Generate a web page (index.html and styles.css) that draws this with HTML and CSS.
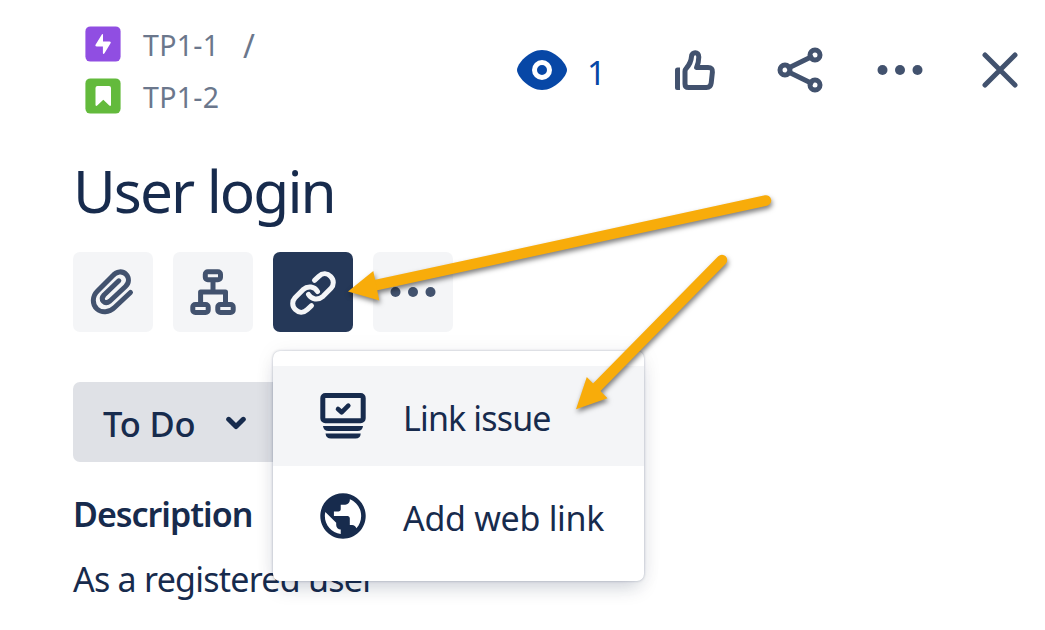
FILE: index.html
```html
<!DOCTYPE html>
<html lang="en">
<head>
<meta charset="utf-8">
<title>User login</title>
<link rel="stylesheet" href="styles.css">
</head>
<body>
<main class="issue">
  <header class="header">
    <nav class="crumbs">
      <div class="crumb">
        <svg class="type" viewBox="0 0 36 36"><rect x=".4" y=".4" width="35.2" height="35.2" rx="5" fill="#904ee2"/><path d="M17 8.3Q18 7.500 18 9V15.400H24.400Q26.500 15.600 25.400 17.400L19.500 27.200Q18 28.700 17.900 27V20.600H11.800Q9.700 20.300 10.700 18.500Z" fill="#fff"/></svg>
        <span class="key">TP1-1</span><span class="slash">/</span>
      </div>
      <div class="crumb">
        <svg class="type" viewBox="0 0 36 36"><rect x=".4" y=".4" width="35.2" height="35.2" rx="5" fill="#63ba3c"/><path d="M12.500 8H24Q26 8 26 10V27Q25.600 28.500 24.300 27.600L18.300 21.700 12.200 27.600Q10.900 28.500 10.500 27V10Q10.500 8 12.500 8Z" fill="#fff"/></svg>
        <span class="key">TP1-2</span>
      </div>
    </nav>
    <div class="actions">
      <svg class="icon eye" viewBox="512 40 60 60"><path d="M517 70C517 64 529 50 542 50S567 64 567 70 555 90 542 90 517 76 517 70Z" fill="#0747a6"/><circle cx="542" cy="70" r="7.500" fill="#0747a6" stroke="#fff" stroke-width="5"/></svg>
      <span class="count">1</span>
      <svg class="icon like" viewBox="665 40 60 60"><path d="M680 67.500V90H677Q675 90 675 88V70Q675 67.500 677.500 67.500Z" fill="#42526e"/><path class="line" d="M685 84V71.500Q685 69.500 686.500 68C690 64 691.200 61 691.500 56.500C691.800 51.300 698.800 51.300 698.800 57C698.800 61 698 64 696.600 67.500H708Q713 67.500 712.400 72L711.200 83Q710.700 87.500 706.500 87.500H688.500Q685 87.500 685 84Z"/></svg>
      <svg class="icon share" viewBox="770 40 60 60"><g class="line"><path d="M789 67.700 811 57M789 72.300 811 83"/><circle cx="785" cy="70" r="5"/><circle cx="815" cy="55" r="5"/><circle cx="815" cy="85" r="5"/></g></svg>
      <svg class="icon dots" viewBox="870 40 60 60"><g fill="#42526e"><circle cx="882.500" cy="70" r="5"/><circle cx="900" cy="70" r="5"/><circle cx="917.500" cy="70" r="5"/></g></svg>
      <svg class="icon close" viewBox="970 40 60 60"><path class="line" d="M985 55 1015 85M1015 55 985 85"/></svg>
    </div>
  </header>

  <h1 class="title">User login</h1>

  <div class="toolbar">
    <button class="tool" aria-label="Attach"><svg viewBox="73 252 80 80"><path class="line" d="M130.500 292.500 114.500 307.500C109 313 101.500 313 97 309C92 304.500 92 296.500 97.500 291L112.500 276C116.500 271 122.500 270.700 126 274.300C129.500 278 129.200 283 125.500 286.500L110 301C107.500 303 105 303 103.300 301.300C101.600 299.500 101.800 297.500 104 295L118.800 280.800"/></svg></button>
    <button class="tool" aria-label="Add child issue"><svg viewBox="173 252 80 80"><g class="line square"><rect x="205.300" y="271.700" width="15.200" height="8" rx="2.500"/><rect x="192.800" y="304.500" width="15.400" height="8" rx="2.500"/><rect x="217.800" y="304.500" width="15.400" height="8" rx="2.500"/><path d="M213 281V291M200.600 303V292H225.500V303"/></g></svg></button>
    <button class="tool active" aria-label="Link"><svg viewBox="273 252 80 80"><g class="line light"><path id="chain" d="M314.500 280.300 318.800 276.300C322.500 272.800 327.500 273.200 330.700 276.500C334.200 280 334 285 331 288.300L323 296.300C318 300.700 311.500 299.500 308.500 294.500"/><use href="#chain" transform="rotate(180 313 293)"/></g></svg></button>
    <button class="tool" aria-label="More"><svg viewBox="373 252 80 80"><g fill="#42526e"><circle cx="395.500" cy="292" r="5"/><circle cx="413" cy="292" r="5"/><circle cx="430.500" cy="292" r="5"/></g></svg></button>
  </div>

  <button class="status"><span class="status-text">To Do</span><svg class="chevron" viewBox="226 416 20 14"><path class="line navy" d="M228.700 419.300 236 426.600 243.300 419.300"/></svg></button>

  <h2 class="subtitle">Description</h2>
  <p class="description">As a registered user</p>

  <div class="menu">
    <div class="item selected">
      <svg class="menu-icon" viewBox="320 393 46 46"><g fill="none" stroke="#172b4d"><rect x="322.800" y="395.500" width="40.400" height="25.300" rx="2.500" stroke-width="5"/><path d="M338 409 341.600 412.300 348.300 405.700" stroke-width="4.600" stroke-linecap="round" stroke-linejoin="round"/></g><path d="M323 426H363Q362.500 431 357.500 431H328.500Q323.500 431 323 426ZM325.500 433.500H360.700Q360.500 438.600 355.500 438.600H331Q326 438.600 325.500 433.500Z" fill="#172b4d"/></svg>
      <span class="label link-label">Link issue</span>
    </div>
    <div class="item">
      <svg class="menu-icon" viewBox="1.870 1.870 20.260 20.260"><path fill="#172b4d" d="M12 2C6.480 2 2 6.480 2 12s4.480 10 10 10 10-4.480 10-10S17.520 2 12 2zm-1 17.930c-3.950-.49-7-3.850-7-7.930 0-.62.080-1.210.210-1.790L9 15v1c0 1.100.9 2 2 2v1.930zm6.900-2.540c-.26-.81-1-1.390-1.900-1.390h-1v-3c0-.55-.45-1-1-1H8v-2h2c.55 0 1-.45 1-1V7h2c1.100 0 2-.9 2-2v-.41c2.930 1.190 5 4.060 5 7.410 0 2.080-.8 3.970-2.100 5.390z"/></svg>
      <span class="label web-label">Add web link</span>
    </div>
  </div>

  <svg class="arrows" viewBox="0 0 1045 630">
    <g class="arrow"><path d="M766 200.500 374 285.500"/><path class="head" d="M348 291.500 373.300 271 379.300 300.500Z"/></g>
    <g class="arrow"><path d="M722 260 595 389"/><path class="head" d="M576 409.300 586.800 377 607.500 398.300Z"/></g>
  </svg>
</main>
</body>
</html>
```
FILE: styles.css
```css
* { box-sizing: border-box; }

body {
  margin: 0;
  background: #fff;
  color: #172b4d;
  font-family: "Noto Sans", "Open Sans", sans-serif;
}

.issue {
  position: relative;
  width: 1045px;
  height: 630px;
  padding: 18px 15px 0 73px;
  overflow: hidden;
}

.header { display: flex; justify-content: space-between; height: 132px; }
.crumbs { padding: 0 0 0 12px; }
.crumb { display: flex; align-items: center; height: 52px; color: #6b778c; font-size: 28.500px; }
.type { width: 36px; height: 36px; }
.key { margin-left: 22px; width: 78px; padding-top: 2px; letter-spacing: 0.300px; }
.slash { margin-left: 22px; padding-top: 4px; font-size: 32px; line-height: 40px; }

.actions { display: flex; align-items: center; height: 60px; margin-top: 22px; }
.icon { width: 60px; height: 60px; flex: none; }
.count { width: 20px; margin: 5px 58px 0 15px; color: #0747a6; font-size: 33px; line-height: 50px; }
.like { margin-right: 45px; }
.share, .dots { margin-right: 40px; }

.line {
  fill: none;
  stroke: #42526e;
  stroke-width: 5px;
  stroke-linecap: round;
  stroke-linejoin: round;
}
.square { stroke-linecap: butt; }
.light { stroke: #f4f5f7; }
.navy { stroke: #172b4d; }

.title { margin: -1px 0 0; height: 103px; font-size: 58.500px; line-height: 82px; font-weight: 400; letter-spacing: -1.900px; white-space: nowrap; }

.toolbar { display: flex; gap: 20px; }
.tool { width: 80px; height: 80px; padding: 0; border: 0; border-radius: 7px; background: #f4f5f7; }
.tool svg { display: block; width: 80px; height: 80px; }
.active { background: #253858; }

.status {
  display: flex;
  align-items: center;
  width: 220px;
  height: 80px;
  margin-top: 50px;
  padding: 2px 0 0 30px;
  border: 0;
  border-radius: 7px;
  background: #dfe1e6;
  color: #172b4d;
  font: 500 34.500px "Noto Sans", sans-serif;
}
.status-text { width: 123px; text-align: left; letter-spacing: -0.200px; }
.chevron { width: 20px; height: 14px; margin-bottom: 1px; }

.subtitle { margin: 28px 0 0; font-size: 34px; line-height: 48px; font-weight: 600; letter-spacing: -1px; }
.description { margin: 17px 0 0; font-size: 34px; line-height: 48px; letter-spacing: -0.750px; }

.menu {
  position: absolute;
  left: 273px;
  top: 351px;
  width: 371px;
  height: 230px;
  padding: 15px 0;
  border-radius: 7px;
  background: #fff;
  box-shadow: 0 10px 20px -5px rgba(9, 30, 66, .2), 0 0 2.500px rgba(9, 30, 66, .31), 0 0 22px rgba(9, 30, 66, .05);
}
.item { display: flex; align-items: center; height: 100px; padding-left: 47px; }
.selected { background: #f4f5f7; }
.menu-icon { width: 46px; height: 46px; }
.label { margin: 3px 0 0 37px; font-size: 34px; line-height: 48px; white-space: nowrap; }
.link-label { letter-spacing: -0.850px; }
.web-label { letter-spacing: -0.300px; }

.arrows { position: absolute; left: 0; top: 0; width: 1045px; height: 630px; pointer-events: none; }
.arrow { fill: none; stroke: #f8ac0a; stroke-width: 10.500px; stroke-linecap: round; filter: drop-shadow(1px 3px 2.500px rgba(0, 0, 0, .5)); }
.head { fill: #f8ac0a; stroke: none; }
```
